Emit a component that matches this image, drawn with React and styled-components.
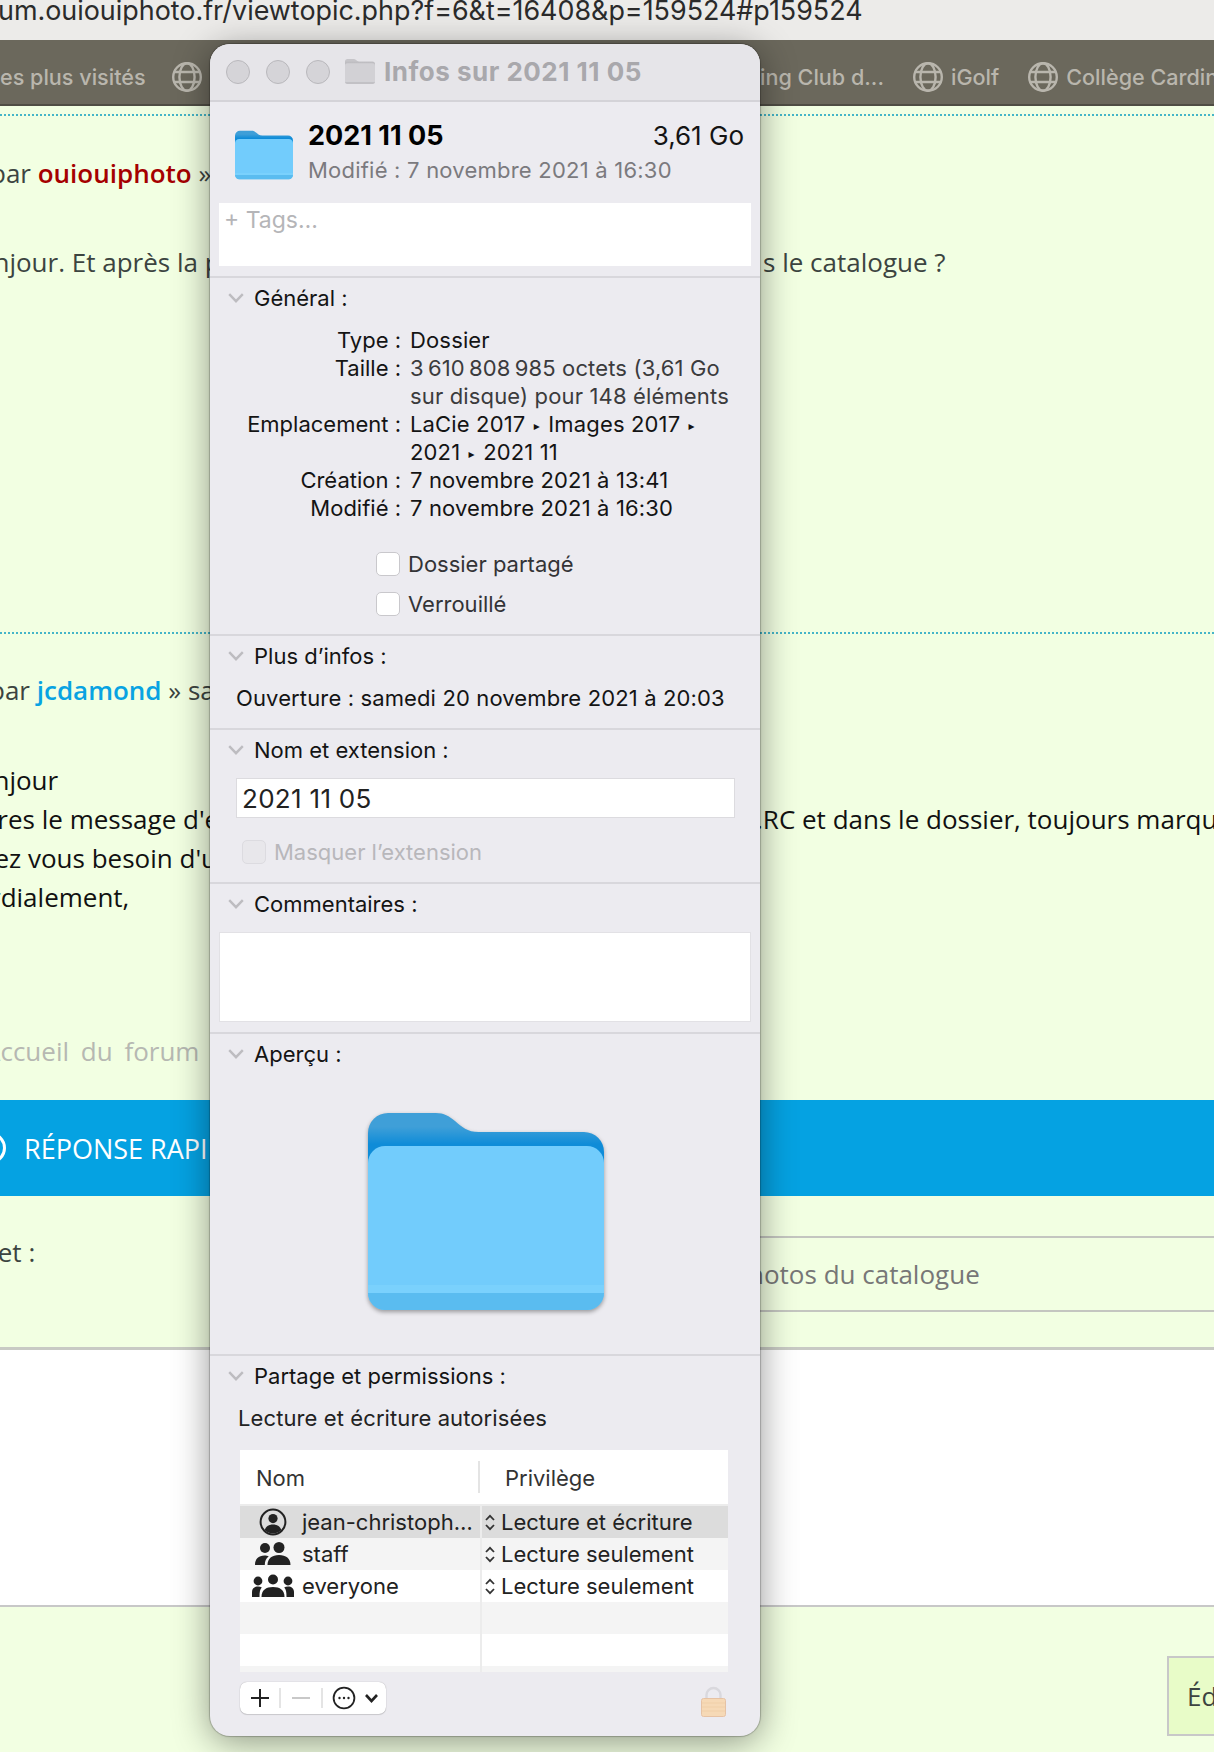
import React from "react";
import styled, { createGlobalStyle } from "styled-components";

const GlobalStyle = createGlobalStyle`
  html, body {
    margin: 0;
    padding: 0;
    background: #f2ffe2;
  }
  * {
    box-sizing: border-box;
  }
`;

const sysFont = `Inter, "Liberation Sans", sans-serif`;
const webFont = `"Open Sans", "Liberation Sans", sans-serif`;

function Globe() {
  return (
    <GlobeSvg viewBox="0 0 30 30" fill="none" stroke="currentColor" strokeWidth="2.4">
      <circle cx="15" cy="15" r="13.8" />
      <ellipse cx="15" cy="15" rx="7.6" ry="13.8" />
      <path d="M2.5 10h25M2.5 20h25" />
    </GlobeSvg>
  );
}

function Folder({ id, width, height, back1, back2, front, band, edge }) {
  return (
    <svg width={width} height={height} viewBox="0 0 236 197">
      <defs>
        <linearGradient id={id} x1="0" y1="0" x2="0" y2="1">
          <stop offset="0" stopColor={back1} />
          <stop offset="0.2" stopColor={back1} />
          <stop offset="0.45" stopColor={back2} />
        </linearGradient>
      </defs>
      <path
        d="M0 20a20 20 0 0 1 20-20h48c8 0 13 3 19 8 7 6 12 11 24 11h105a20 20 0 0 1 20 20v30H0z"
        fill={`url(#${id})`}
      />
      <rect y="33" width="236" height="164" rx="17" fill={front} />
      <path d="M0 172h236v8H0z" fill={edge} />
      <path d="M0 180h236v0a17 17 0 0 1-17 17H17A17 17 0 0 1 0 180z" fill={band} />
    </svg>
  );
}

function Chevron() {
  return (
    <ChevronSvg viewBox="0 0 16 10" fill="none" stroke="#bdbcc0" strokeWidth="2.4">
      <path d="M1.2 1.2 8 8.2l6.8-7" />
    </ChevronSvg>
  );
}

function UserIcon({ kind }) {
  if (kind === "user") {
    return (
      <svg width="28" height="28" viewBox="0 0 28 28" fill="#222">
        <circle cx="14" cy="14" r="12.4" fill="none" stroke="#222" strokeWidth="2" />
        <circle cx="14" cy="10.6" r="4.6" />
        <path d="M5.6 22c1.4-4 4.6-5.6 8.4-5.6s7 1.6 8.4 5.6c-2.2 2.2-5.2 3.4-8.4 3.4S7.800 24.2 5.600 22z" />
      </svg>
    );
  }
  if (kind === "staff") {
    return (
      <svg width="36" height="24" viewBox="0 0 36 24" fill="#222">
        <circle cx="10" cy="6" r="5" />
        <circle cx="24" cy="5.500" r="5.500" />
        <path d="M0 23c0-6 3.500-9.500 9.500-9.500 1.700 0 3 .3 4.200 1C11 16.500 9.800 19 9.800 23z" />
        <path d="M12.500 23c0-6.500 4.500-10 11.500-10s11.500 3.500 11.500 10z" />
      </svg>
    );
  }
  return (
    <svg width="42" height="24" viewBox="0 0 42 24" fill="#222">
      <circle cx="6" cy="7" r="4.400" />
      <circle cx="21" cy="5.500" r="5" />
      <circle cx="36" cy="7" r="4.400" />
      <path d="M0 23v-5c0-3.500 2.500-5.500 6-5.500 1.500 0 2.800.3 3.800 1C8 15 7.500 18 7.500 23z" />
      <path d="M42 23v-5c0-3.500-2.500-5.500-6-5.500-1.500 0-2.800.3-3.800 1 1.800 1.500 2.300 4.500 2.300 9.500z" />
      <path d="M9.500 23c0-7 4.500-10 11.500-10s11.500 3 11.500 10z" />
    </svg>
  );
}

function UpDown() {
  return (
    <svg width="10" height="17" viewBox="0 0 10 17" fill="none" stroke="#333" strokeWidth="1.800">
      <path d="M1 6l4-4.200L9 6M1 11l4 4.200L9 11" />
    </svg>
  );
}

const rows = [
  { icon: "user", name: "jean-christoph…", right: "Lecture et écriture", bg: "#dcdcdc" },
  { icon: "staff", name: "staff", right: "Lecture seulement", bg: "#f4f4f4" },
  { icon: "all", name: "everyone", right: "Lecture seulement", bg: "#ffffff" },
  { bg: "#f4f4f4" },
  { bg: "#ffffff" },
];

function SectionHead({ children }) {
  return (
    <Head>
      <Chevron />
      <span>{children}</span>
    </Head>
  );
}

function InfoWindow() {
  const infoRows = [
    { label: "Type :", value: "Dossier" },
    { label: "Taille :", value: "3\u202f610\u202f808\u202f985 octets (3,61 Go", soft: true },
    { label: "", value: "sur disque) pour 148 éléments", soft: true },
    {
      label: "Emplacement :",
      value: (
        <>
          LaCie 2017 <Arrow>▸</Arrow> Images 2017 <Arrow>▸</Arrow>
        </>
      ),
    },
    {
      label: "",
      value: (
        <>
          2021 <Arrow>▸</Arrow> 2021 11
        </>
      ),
    },
    { label: "Création :", value: "7 novembre 2021 à 13:41" },
    { label: "Modifié :", value: "7 novembre 2021 à 16:30" },
  ];

  return (
    <Win>
      <TitleBar>
        <Lights>
          <Light />
          <Light />
          <Light />
        </Lights>
        <Folder
          id="grey"
          width={30}
          height={27}
          back1="#c6c5c9"
          back2="#bdbcc0"
          front="#d2d1d5"
          band="#c2c1c5"
          edge="#d9d8dc"
        />
        <TitleText>Infos sur 2021 11 05</TitleText>
      </TitleBar>

      <Summary>
        <SummaryTop>
          <Folder
            id="small"
            width={58}
            height={54}
            back1="#3f9fd8"
            back2="#0f8cd8"
            front="#72ccfc"
            band="#5abcf0"
            edge="#7ad1fd"
          />
          <SummaryText>
            <NameLine>
              <strong>2021 11 05</strong>
              <span>3,61 Go</span>
            </NameLine>
            <Modified>Modifié : 7 novembre 2021 à 16:30</Modified>
          </SummaryText>
        </SummaryTop>
        <TagsBox>+ Tags…</TagsBox>
      </Summary>

      <Section>
        <SectionHead>Général :</SectionHead>
        <InfoGrid>
          {infoRows.map((row, i) => (
            <React.Fragment key={i}>
              <InfoLabel>{row.label}</InfoLabel>
              <InfoValue $soft={row.soft}>{row.value}</InfoValue>
            </React.Fragment>
          ))}
        </InfoGrid>
        <Checks>
          <CheckRow>
            <CheckBox />
            Dossier partagé
          </CheckRow>
          <CheckRow>
            <CheckBox />
            Verrouillé
          </CheckRow>
        </Checks>
      </Section>

      <Section>
        <SectionHead>Plus d’infos :</SectionHead>
        <OpenLine>Ouverture : samedi 20 novembre 2021 à 20:03</OpenLine>
      </Section>

      <Section>
        <SectionHead>Nom et extension :</SectionHead>
        <NameInput>2021 11 05</NameInput>
        <HideExt>
          <CheckBox $disabled />
          Masquer l’extension
        </HideExt>
      </Section>

      <Section>
        <SectionHead>Commentaires :</SectionHead>
        <CommentBox />
      </Section>

      <Section>
        <SectionHead>Aperçu :</SectionHead>
        <Preview>
          <Folder
            id="big"
            width={236}
            height={197}
            back1="#3f9fd8"
            back2="#0f8cd8"
            front="#72ccfc"
            band="#5abcf0"
            edge="#7ad1fd"
          />
        </Preview>
      </Section>

      <LastSection>
        <SectionHead>Partage et permissions :</SectionHead>
        <Access>Lecture et écriture autorisées</Access>
        <PermTable>
          <PermHeader>
            <HeadNom>Nom</HeadNom>
            <HeadPriv>Privilège</HeadPriv>
          </PermHeader>
          {rows.map((row, i) => (
            <PermRow key={i}>
              <NameCell $bg={row.bg}>
                {row.icon && (
                  <IconSlot>
                    <UserIcon kind={row.icon} />
                  </IconSlot>
                )}
                {row.name}
              </NameCell>
              <PrivCell $bg={row.bg}>
                {row.right && (
                  <>
                    <UpDown />
                    {row.right}
                  </>
                )}
              </PrivCell>
            </PermRow>
          ))}
          <PermRow $short>
            <NameCell $bg="#f4f4f4" />
            <PrivCell $bg="#f4f4f4" />
          </PermRow>
        </PermTable>
        <BottomBar>
          <Buttons>
            <BarBtn $width={41}>
              <svg width="20" height="20" viewBox="0 0 20 20" stroke="#222" strokeWidth="2">
                <path d="M10 1v18M1 10h18" />
              </svg>
            </BarBtn>
            <BarBtn $width={42}>
              <svg width="20" height="20" viewBox="0 0 20 20" stroke="#c8c8c8" strokeWidth="2">
                <path d="M1 10h18" />
              </svg>
            </BarBtn>
            <BarBtn $width={63} $last>
              <svg width="48" height="24" viewBox="0 0 48 24" fill="none" stroke="#222" strokeWidth="1.800">
                <circle cx="13" cy="12" r="10.400" />
                <circle cx="8.500" cy="12" r="1.200" fill="#222" stroke="none" />
                <circle cx="13" cy="12" r="1.200" fill="#222" stroke="none" />
                <circle cx="17.500" cy="12" r="1.200" fill="#222" stroke="none" />
                <path d="M35 9l5.500 6L46 9" strokeWidth="2.600" />
              </svg>
            </BarBtn>
          </Buttons>
          <LockIcon width="25" height="31" viewBox="0 0 25 31">
            <path d="M5.500 13V9a7 7 0 0 1 14 0v4" fill="none" stroke="#d9d8dd" strokeWidth="2.400" />
            <rect x=".5" y="12.500" width="24" height="18" rx="2" fill="#f6d9b6" stroke="#e6c2a4" />
            <path d="M1 17h23M1 21h23M1 25h23" stroke="#f0cfa8" />
          </LockIcon>
        </BottomBar>
      </LastSection>
    </Win>
  );
}

export default function App() {
  return (
    <>
      <GlobalStyle />
      <Page>
        <UrlBar>um.ouiouiphoto.fr/viewtopic.php?f=6&amp;t=16408&amp;p=159524#p159524</UrlBar>
        <Bookmarks>
          <MarksLeft>
            <Mark>es plus visités</Mark>
            <Globe />
          </MarksLeft>
          <MarksRight>
            <Mark>ing Club d...</Mark>
            <Globe />
            <Mark>iGolf</Mark>
            <Globe />
            <Mark>Collège Cardinal</Mark>
          </MarksRight>
        </Bookmarks>

        <Post>
          <TwoSides>
            <LeftText $indent={-10}>
              par <Author $color="#a50000">ouiouiphoto</Author> »
            </LeftText>
          </TwoSides>
          <TwoSides $top={50}>
            <LeftText $indent={-39}>Bonjour. Et après la publication</LeftText>
            <RightText $indent={3}>s le catalogue ?</RightText>
          </TwoSides>
        </Post>

        <Post>
          <TwoSides>
            <LeftText $indent={-11}>
              par <Author $color="#08a3e2">jcdamond</Author> » samedi
            </LeftText>
          </TwoSides>
          <TwoSides $top={51}>
            <LeftText $indent={-39} $black>Bonjour</LeftText>
          </TwoSides>
          <TwoSides>
            <LeftText $indent={-35} $black>Apres le message d'erreur</LeftText>
            <RightText $indent={-4} $black>.RC et dans le dossier, toujours marqué</RightText>
          </TwoSides>
          <TwoSides>
            <LeftText $indent={-35} $black>Avez vous besoin d'un</LeftText>
          </TwoSides>
          <TwoSides>
            <LeftText $indent={-42} $black>Cordialement,</LeftText>
          </TwoSides>
        </Post>

        <ForumLink>Accueil du forum</ForumLink>

        <ReplyBand>
          <BandCircle />
          RÉPONSE RAPIDE
        </ReplyBand>

        <SubjectRow>
          <SubjectLabel>Sujet :</SubjectLabel>
          <SubjectInput>hotos du catalogue</SubjectInput>
        </SubjectRow>

        <Editor />

        <Footer>
          <EditBtn>Éditer</EditBtn>
        </Footer>

        <InfoWindow />
      </Page>
    </>
  );
}

const Page = styled.div`
  position: relative;
  width: 1214px;
  height: 1752px;
  overflow: hidden;
  background: #f2ffe2;
  font-family: ${webFont};
`;

const UrlBar = styled.div`
  height: 40px;
  background: #ecebe9;
  color: #2b2b2b;
  font-family: ${sysFont};
  font-size: 26.9px;
  line-height: 20px;
  text-indent: -2px;
  white-space: nowrap;
  overflow: hidden;
`;

const Bookmarks = styled.div`
  display: flex;
  height: 66px;
  padding-top: 10px;
  background: #6b685c;
  border-bottom: 2px solid #4f4d44;
  color: #b9b6ad;
  font-family: ${sysFont};
  font-size: 21.6px;
  font-weight: 500;
`;

const MarksLeft = styled.div`
  display: flex;
  align-items: center;
  width: 210px;
  flex-shrink: 0;

  span {
    margin-right: 26px;
  }
`;

const MarksRight = styled.div`
  display: flex;
  align-items: center;
  margin-left: 550px;
  white-space: nowrap;
`;

const Mark = styled.span`
  white-space: nowrap;
  margin-right: 29px;

  & + svg + & {
    margin-left: 8px;
  }
`;

const GlobeSvg = styled.svg`
  width: 30px;
  height: 30px;
  flex-shrink: 0;
`;

const Post = styled.div`
  margin-top: 8px;
  height: 518px;
  padding-top: 38px;
  border-top: 2px dotted #45b5c8;

  & + & {
    margin-top: 0;
    height: 400px;
    padding-top: 37px;
  }
`;

const TwoSides = styled.div`
  display: grid;
  grid-template-columns: 210px 1fr;
  column-gap: 550px;
  height: 39px;
  margin-top: ${({ $top }) => $top || 0}px;
  font-size: 26px;
  line-height: 39px;
  white-space: nowrap;
`;

const LeftText = styled.div`
  overflow: hidden;
  text-indent: ${({ $indent }) => $indent}px;
  color: ${({ $black }) => ($black ? "#111" : "#3c4440")};
`;

const RightText = styled.div`
  overflow: hidden;
  text-indent: ${({ $indent }) => $indent}px;
  color: ${({ $black }) => ($black ? "#111" : "#3c4440")};
`;

const Author = styled.b`
  color: ${({ $color }) => $color};
  font-weight: 600;
`;

const ForumLink = styled.div`
  width: 210px;
  height: 39px;
  overflow: hidden;
  color: #b6b8b2;
  font-size: 26px;
  line-height: 39px;
  word-spacing: 5px;
  white-space: nowrap;
  text-indent: -16px;
`;

const ReplyBand = styled.div`
  display: flex;
  align-items: center;
  gap: 18px;
  height: 96px;
  margin-top: 29px;
  background: #05a2e2;
  color: #fff;
  font-size: 27px;
  white-space: nowrap;
  overflow: hidden;
`;

const BandCircle = styled.span`
  width: 32px;
  height: 32px;
  flex-shrink: 0;
  margin-left: -26px;
  border: 3px solid #fff;
  border-radius: 50%;
`;

const SubjectRow = styled.div`
  display: grid;
  grid-template-columns: 210px 1fr;
  column-gap: 550px;
  height: 154px;
  padding-top: 40px;
  border-bottom: 3px solid #c8cac4;
`;

const SubjectLabel = styled.div`
  height: 39px;
  margin-top: -3px;
  overflow: hidden;
  color: #3c4440;
  font-size: 26px;
  line-height: 39px;
  text-indent: -39px;
`;

const SubjectInput = styled.div`
  height: 76px;
  margin-left: -550px;
  padding-left: 538px;
  border-top: 2px solid #c4c6c0;
  border-bottom: 2px solid #c4c6c0;
  color: #777;
  font-size: 26px;
  font-weight: 500;
  line-height: 72px;
  white-space: nowrap;
  overflow: hidden;
`;

const Editor = styled.div`
  height: 257px;
  background: #fff;
  border-bottom: 2px solid #c8c8c8;
`;

const Footer = styled.div`
  display: flex;
  justify-content: flex-start;
  padding: 49px 0 0 1167px;
`;

const EditBtn = styled.div`
  width: 120px;
  height: 80px;
  flex-shrink: 0;
  padding-left: 18px;
  background: #e8fcc8;
  border: 2px solid #c8c8c8;
  color: #3c4440;
  font-size: 26px;
  line-height: 76px;
`;

/* Info window, floats above the forum page */
const Win = styled.div`
  position: absolute;
  left: 210px;
  top: 44px;
  width: 550px;
  height: 1692px;
  overflow: hidden;
  background: #ecebf0;
  border-radius: 20px;
  box-shadow: 0 0 1px 1px rgba(0, 0, 0, 0.22), 0 6px 36px rgba(0, 0, 0, 0.42);
  color: #141414;
  font-family: ${sysFont};
  font-size: 22px;
`;

const TitleBar = styled.div`
  display: flex;
  align-items: center;
  height: 58px;
  padding: 0 0 1px 16px;
  background: #e6e5e9;
  border-bottom: 2px solid #d4d3d8;
`;

const Lights = styled.div`
  display: flex;
  gap: 16px;
  margin-right: 15px;
`;

const Light = styled.span`
  width: 24px;
  height: 24px;
  background: #d5d4d8;
  border: 1px solid #b9b8bc;
  border-radius: 50%;
`;

const TitleText = styled.div`
  margin-left: 9px;
  color: #a9a8ac;
  font-size: 26px;
  font-weight: 700;
  letter-spacing: 0.5px;
  white-space: nowrap;
`;

const Summary = styled.div`
  height: 176px;
  padding: 25px 9px 0;
  border-bottom: 2px solid #d8d7dc;
`;

const SummaryTop = styled.div`
  display: flex;
  gap: 15px;
  padding: 1px 7px 0 16px;
`;

const SummaryText = styled.div`
  flex: 1;
  margin-top: -10px;
`;

const NameLine = styled.div`
  display: flex;
  justify-content: space-between;
  height: 36px;
  font-size: 26px;
  line-height: 36px;

  strong {
    font-size: 27px;
    font-weight: 700;
    color: #000;
  }
`;

const Modified = styled.div`
  margin-top: 1px;
  color: #7b7a7e;
  font-size: 22px;
  letter-spacing: 0.22px;
  line-height: 30px;
  white-space: nowrap;
`;

const TagsBox = styled.div`
  height: 63px;
  margin-top: 18px;
  padding-left: 5px;
  background: #fff;
  color: #b5b5b8;
  font-size: 23px;
  line-height: 34px;
`;

const Section = styled.section`
  border-bottom: 2px solid #d8d7dc;
`;

const LastSection = styled.section`
  padding-right: 32px;
`;

const Head = styled.div`
  display: flex;
  align-items: center;
  height: 40px;
  padding-left: 18px;

  span {
    margin-left: 10px;
    color: #141414;
    white-space: nowrap;
  }
`;

const ChevronSvg = styled.svg`
  width: 16px;
  height: 10px;
  flex-shrink: 0;
`;

const InfoGrid = styled.div`
  display: grid;
  grid-template-columns: 191px 1fr;
  column-gap: 9px;
  margin-top: 8px;
  line-height: 28px;
`;

const InfoLabel = styled.div`
  height: 28px;
  text-align: right;
  white-space: nowrap;
`;

const InfoValue = styled.div`
  height: 28px;
  letter-spacing: 0.15px;
  white-space: nowrap;
  color: ${({ $soft }) => ($soft ? "#3b3b3d" : "#141414")};
`;

const Arrow = styled.span`
  display: inline-block;
  margin: 0 2px;
  font-family: "DejaVu Sans", sans-serif;
  font-size: 12px;
  vertical-align: 2px;
`;

const Checks = styled.div`
  display: flex;
  flex-direction: column;
  gap: 16px;
  margin-top: 30px;
  padding: 0 0 18px 166px;
`;

const CheckRow = styled.div`
  display: flex;
  align-items: center;
  gap: 8px;
  height: 24px;
  color: #333336;
`;

const CheckBox = styled.span`
  width: 24px;
  height: 24px;
  flex-shrink: 0;
  background: ${({ $disabled }) => ($disabled ? "#e8e7eb" : "#fff")};
  border: 1px solid ${({ $disabled }) => ($disabled ? "#dcdbe0" : "#c9c8cc")};
  border-radius: 5px;
`;

const OpenLine = styled.div`
  height: 28px;
  margin: 8px 0 16px 26px;
  letter-spacing: 0.13px;
  line-height: 28px;
  white-space: nowrap;
`;

const NameInput = styled.div`
  width: 499px;
  height: 40px;
  margin: 8px 0 0 26px;
  padding-left: 5px;
  background: #fff;
  border: 1px solid #dcdbdf;
  font-size: 26px;
  letter-spacing: 0.3px;
  line-height: 40px;
  color: #222;
`;

const HideExt = styled.div`
  display: flex;
  align-items: center;
  gap: 8px;
  height: 24px;
  margin: 22px 0 18px 32px;
  color: #b8b7bb;
`;

const CommentBox = styled.div`
  height: 90px;
  margin: 8px 9px 10px;
  background: #fff;
  border: 1px solid #e2e1e5;
`;

const Preview = styled.div`
  display: flex;
  justify-content: center;
  padding: 39px 0 44px 2px;

  svg {
    filter: drop-shadow(0 2px 2px rgba(0, 0, 0, 0.35));
  }
`;

const Access = styled.div`
  height: 28px;
  margin: 8px 0 18px 28px;
  letter-spacing: 0.1px;
  line-height: 28px;
  color: #222;
`;

const PermTable = styled.div`
  width: 488px;
  height: 222px;
  margin-left: 30px;
  overflow: hidden;
  background: #ececec;
`;

const PermHeader = styled.div`
  display: flex;
  align-items: center;
  height: 54px;
  margin-bottom: 2px;
  background: #fff;
  color: #333;
`;

const HeadNom = styled.div`
  width: 240px;
  height: 32px;
  padding-left: 16px;
  line-height: 34px;
  border-right: 2px solid #e4e4e4;
`;

const HeadPriv = styled.div`
  padding: 2px 0 0 25px;
`;

const PermRow = styled.div`
  display: grid;
  grid-template-columns: 240px 1fr;
  column-gap: 2px;
  height: ${({ $short }) => ($short ? 6 : 32)}px;
`;

const NameCell = styled.div`
  display: flex;
  align-items: center;
  background: ${({ $bg }) => $bg};
  color: #222;
  white-space: nowrap;
  overflow: hidden;
`;

const IconSlot = styled.span`
  display: flex;
  justify-content: center;
  width: 62px;
  padding-left: 4px;
  flex-shrink: 0;
`;

const PrivCell = styled.div`
  display: flex;
  align-items: center;
  gap: 6px;
  padding-left: 3px;
  background: ${({ $bg }) => $bg};
  color: #222;
  white-space: nowrap;
`;

const BottomBar = styled.div`
  display: flex;
  justify-content: space-between;
  align-items: flex-start;
  margin: 10px 0 0 30px;
`;

const LockIcon = styled.svg`
  margin: 4px 2px 0 0;
`;

const Buttons = styled.div`
  display: flex;
  align-items: center;
  height: 32px;
  background: #fff;
  border-radius: 7px;
  box-shadow: 0 0 1px rgba(0, 0, 0, 0.35), 0 1px 1px rgba(0, 0, 0, 0.12);
`;

const BarBtn = styled.div`
  display: flex;
  align-items: center;
  justify-content: center;
  width: ${({ $width }) => $width}px;
  height: 20px;
  border-right: ${({ $last }) => ($last ? "none" : "2px solid #e4e4e4")};
`;
